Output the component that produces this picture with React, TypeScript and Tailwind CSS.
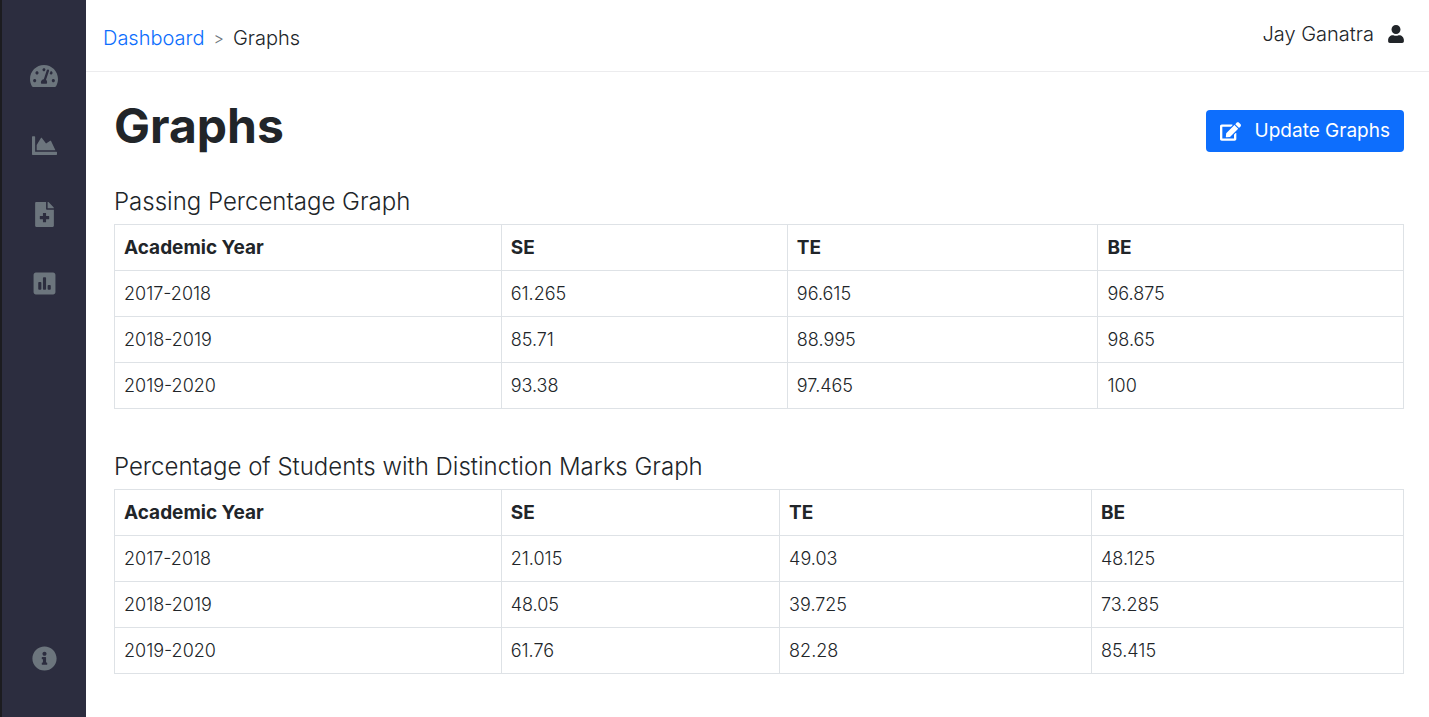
import {
  FaChartArea,
  FaEdit,
  FaFileMedical,
  FaInfoCircle,
  FaPoll,
  FaTachometerAlt,
  FaUser,
} from "react-icons/fa";

type GraphTable = {
  title: string;
  columns: string[];
  rows: string[][];
};

const header = ["Academic Year", "SE", "TE", "BE"];

const passing: GraphTable = {
  title: "Passing Percentage Graph",
  columns: ["w-[30%]", "w-[22.2%]", "w-[24.1%]", "w-[23.7%]"],
  rows: [
    ["2017-2018", "61.265", "96.615", "96.875"],
    ["2018-2019", "85.71", "88.995", "98.65"],
    ["2019-2020", "93.38", "97.465", "100"],
  ],
};

const distinction: GraphTable = {
  title: "Percentage of Students with Distinction Marks Graph",
  columns: ["w-[30%]", "w-[21.6%]", "w-[24.2%]", "w-[24.2%]"],
  rows: [
    ["2017-2018", "21.015", "49.03", "48.125"],
    ["2018-2019", "48.05", "39.725", "73.285"],
    ["2019-2020", "61.76", "82.28", "85.415"],
  ],
};

function Sidebar() {
  return (
    <nav
      aria-label="Main"
      className="flex w-[86px] shrink-0 flex-col items-center border-l-2 border-[#1c1c20] bg-[#2c2d3f] pt-[62px] pb-[45px] text-[#6c757d]"
    >
      <div className="flex flex-col items-center gap-[41px]">
        <a href="#dashboard" aria-label="Dashboard" className="flex h-7 items-center">
          <FaTachometerAlt size={28} />
        </a>
        <a href="#graphs" aria-label="Graphs" className="flex h-7 items-center">
          <FaChartArea size={25} />
        </a>
        <a href="#add" aria-label="Add record" className="flex h-7 items-center">
          <FaFileMedical size={25} />
        </a>
        <a href="#results" aria-label="Results" className="flex h-7 items-center">
          <FaPoll size={25} />
        </a>
      </div>
      <a href="#about" aria-label="About" className="mt-auto flex h-7 items-center">
        <FaInfoCircle size={25} />
      </a>
    </nav>
  );
}

function DataTable({ table }: { table: GraphTable }) {
  return (
    <section>
      <h2 className="mb-1 text-2xl leading-9 font-light">{table.title}</h2>
      <table
        aria-label={table.title}
        className="w-full table-fixed border-collapse text-left text-[18px] leading-7"
      >
        <thead>
          <tr>
            {header.map((name, i) => (
              <th
                key={name}
                scope="col"
                className={`${table.columns[i]} h-[46px] border border-[#dee2e6] px-[9px] text-[19px] font-bold`}
              >
                {name}
              </th>
            ))}
          </tr>
        </thead>
        <tbody>
          {table.rows.map((row) => (
            <tr key={row[0]}>
              {row.map((value, i) => (
                <td key={i} className="h-[46px] border border-[#dee2e6] px-[9px] font-light">
                  {value}
                </td>
              ))}
            </tr>
          ))}
        </tbody>
      </table>
    </section>
  );
}

export default function App() {
  return (
    <div className="flex min-h-screen bg-white font-['Inter','Open_Sans',sans-serif] text-[#212529]">
      <Sidebar />
      <div className="min-w-0 flex-1">
        <header className="flex items-center justify-between border-b border-[#ececee] pt-[6px] pr-6 pb-px pl-[17px]">
          <nav aria-label="Breadcrumb" className="flex h-16 items-center gap-[9px] text-[20px] font-light">
            <a href="#dashboard" className="text-[#0d6efd]">
              Dashboard
            </a>
            <span aria-hidden="true" className="text-[16px] text-[#6c757d]">&gt;</span>
            <span>Graphs</span>
          </nav>
          <div className="flex items-center gap-[13px] pb-2 text-[20px] font-light">
            <span>Jay Ganatra</span>
            <FaUser size={18} />
          </div>
        </header>
        <main className="pt-[22px] pr-[25px] pb-10 pl-7">
          <div className="mb-[26px] flex items-center justify-between">
            <h1 className="text-5xl leading-[64px] font-bold">Graphs</h1>
            <button
              type="button"
              className="mt-[10px] flex h-[42px] items-center gap-[14px] rounded-[4px] bg-[#0d6efd] px-[14px] text-[19px] text-white"
            >
              <FaEdit size={21} />
              Update Graphs
            </button>
          </div>
          <div className="flex flex-col gap-10">
            <DataTable table={passing} />
            <DataTable table={distinction} />
          </div>
        </main>
      </div>
    </div>
  );
}
